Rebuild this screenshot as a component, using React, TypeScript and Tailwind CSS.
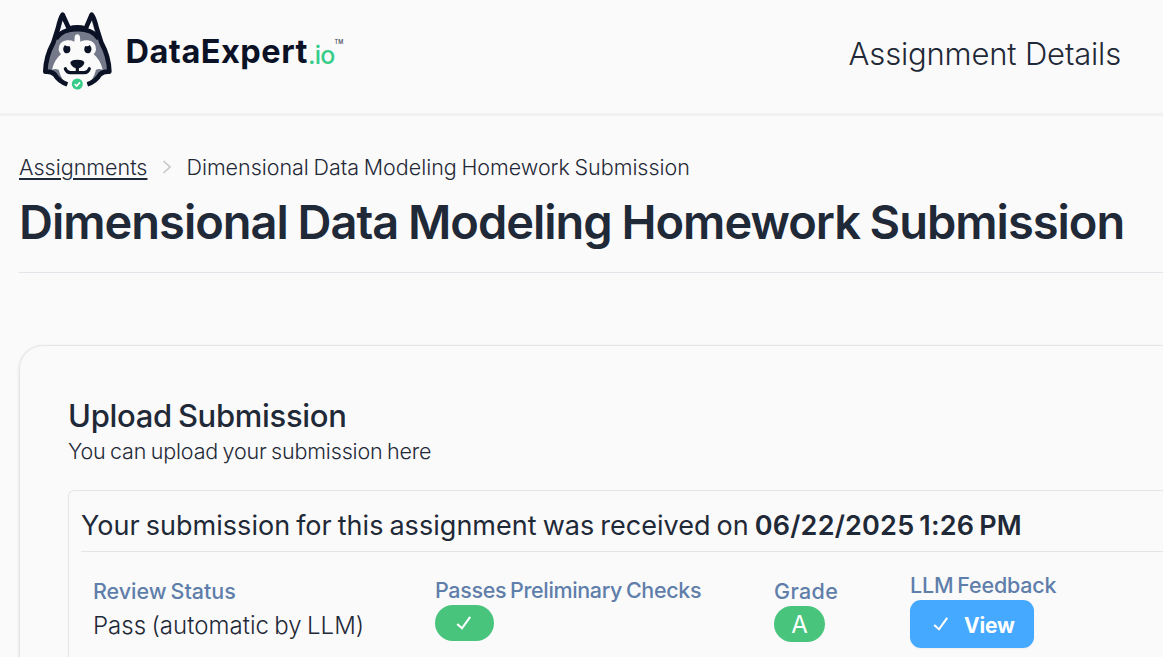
import type { ReactNode } from "react";

function HuskyMark() {
  return (
    <svg viewBox="36 30 213 246" className="h-[82px] w-[71px] shrink-0" fill="none">
      <path
        d="M98 44 L117 86 Q142 78 167 86 L185 44 Q194 54 201 84 L214 128 Q235 170 238 213 Q222 217 211 222 Q204 242 172 253 L112 253 Q80 242 73 222 Q62 217 46 213 Q49 170 70 128 L83 84 Q90 54 98 44Z"
        fill="#747a89"
      />
      <path
        d="M142 103 Q149 103 150 112 L151 125 Q160 120 174 121 Q198 125 198 149 Q197 157 191 163 Q210 178 218 209 Q208 205 198 209 Q190 240 172 252 L112 252 Q94 240 86 209 Q76 205 66 209 Q74 178 93 163 Q87 157 86 149 Q86 125 110 121 Q124 120 133 125 L134 112 Q135 103 142 103Z"
        fill="#fafafa"
      />
      <path d="M98 62 L113 88 Q98 93 87 103Z M185 62 L170 88 Q185 93 197 103Z" fill="#fafafa" />
      <path
        d="M112 253 Q86 244 74 223 Q62 213 46 215 Q47 170 70 128 L84 84 Q91 54 98 44 L117 86 Q142 78 167 86 L185 44 Q193 54 200 84 L214 128 Q237 170 238 215 Q222 213 210 223 Q198 244 172 253"
        stroke="#0b1226"
        strokeWidth="14"
        strokeLinejoin="round"
      />
      <path d="M78 117 Q94 88 142 87 Q190 88 206 117" stroke="#0b1226" strokeWidth="13" />
      <path
        d="M105 135 Q110 141 118 138 Q124 148 119 156 Q112 163 104 158 Q97 150 101 141Z M179 135 Q174 141 166 138 Q160 148 165 156 Q172 163 180 158 Q187 150 183 141Z"
        fill="#0b1226"
      />
      <path
        d="M142 179 Q162 179 163 188 Q162 198 147 205 L137 205 Q122 198 121 188 Q122 179 142 179Z"
        fill="#0b1226"
      />
      <path
        d="M142 200 V216 M106 206 Q110 218 121 218 H163 Q174 218 178 206"
        stroke="#0b1226"
        strokeWidth="9.5"
        strokeLinecap="round"
      />
      <path d="M114 240 H170 V272 H114Z" fill="#fafafa" />
      <circle cx="142" cy="252" r="16.5" fill="#37cc89" />
      <path d="M134 252 L140 258 L150 247" stroke="#fff" strokeWidth="5" />
    </svg>
  );
}

function Check() {
  return (
    <svg viewBox="0 0 16 16" className="size-4 shrink-0" fill="none">
      <path d="M1.2 9 L6 13.3 L14.2 1.8" stroke="#fff" strokeWidth="2.1" />
    </svg>
  );
}

function Label({ children, className }: { children: ReactNode; className: string }) {
  return (
    <div className={`text-[21.5px] leading-7 font-medium whitespace-nowrap text-[#607eaa] [word-spacing:-1.5px] ${className}`}>
      {children}
    </div>
  );
}

export default function App() {
  return (
    <div className="h-[657px] overflow-hidden bg-[#fafafa] font-['Inter','Liberation_Sans',sans-serif] text-[#1f2937]">
      <header className="flex h-[116px] justify-between border-b-3 border-[#f1f1f1] pr-[42px] pl-[42px]">
        <div className="flex pt-2.5">
          <HuskyMark />
          <div className="flex pt-[22px] pl-[12.5px] leading-10 text-[#0b1226]">
            <span className="text-[32.5px] font-bold tracking-[0.5px]">DataExpert</span>
            <span className="pt-[3px] text-[25px] font-medium tracking-[-0.8px] text-[#37cc89]">.io</span>
            <span className="pt-[4px] text-[5.5px] leading-3 font-medium text-[#3c4253]">TM</span>
          </div>
        </div>
        <div className="pt-[34px] text-[31px] leading-10 font-light tracking-[-0.17px]">Assignment Details</div>
      </header>

      <main className="pl-[19px]">
        <nav className="flex items-center pt-[37px] text-[21.5px] leading-7 font-light whitespace-nowrap">
          <a className="underline decoration-2 underline-offset-[3px]">Assignments</a>
          <svg viewBox="0 0 10 14" className="mr-[14px] ml-[15px] h-3.5 w-2.5" fill="none">
            <path d="M1.5 1 L8 7 L1.5 13" stroke="#c5c8cd" strokeWidth="1.7" />
          </svg>
          <span className="tracking-[-0.03px] [word-spacing:-1.3px]">Dimensional Data Modeling Homework Submission</span>
        </nav>
        <h1 className="mt-[13px] border-b border-[#e3e5ea] pb-[22px] text-[47px] leading-14 font-semibold tracking-[-1px] whitespace-nowrap [word-spacing:-1.2px]">
          Dimensional Data Modeling Homework Submission
        </h1>

        <section className="mt-[72px] h-[400px] rounded-tl-3xl border-t border-l border-[#e5e5e5] pt-[50px] pl-12 shadow-[0_1px_3px_rgba(0,0,0,0.12)]">
          <h2 className="text-[31px] leading-10 font-medium tracking-[-0.3px] [word-spacing:-2px]">Upload Submission</h2>
          <p className="mt-px text-[21.5px] leading-7 font-light tracking-[-0.15px] [word-spacing:-1.5px]">
            You can upload your submission here
          </p>

          <div className="mt-[25px] h-[260px] rounded-tl-md border-t border-l border-[#e5e5e5] pt-[17px] pl-3">
            <p className="border-b border-[#e5e5e5] pb-[7px] text-[27px] leading-9 whitespace-nowrap">
              <span className="tracking-[0.04px] [word-spacing:-1.7px]">Your submission for this assignment was received on </span>
              <b className="font-semibold tracking-[0.2px] [word-spacing:-2px]">06/22/2025 1:26 PM</b>
            </p>
            <div className="mt-[19px] flex h-[77px] items-center pl-3">
              <div className="w-[342px] shrink-0">
                <Label className="tracking-[-0.05px]">Review Status</Label>
                <div className="mt-[5px] mb-px text-[24px] leading-8 font-light tracking-[0.04px] whitespace-nowrap [word-spacing:-1.5px]">
                  Pass (automatic by LLM)
                </div>
              </div>
              <div className="w-[339px] shrink-0">
                <Label className="tracking-[-0.35px]">Passes Preliminary Checks</Label>
                <div className="mt-px mb-[3px] flex h-9 w-[59px] items-center justify-center rounded-full bg-[#48c47d] pr-0.5">
                  <Check />
                </div>
              </div>
              <div className="w-[136px] shrink-0">
                <Label className="tracking-[0.35px]">Grade</Label>
                <div className="mt-px flex h-9 w-[51px] items-center justify-center rounded-full bg-[#48c47d] pt-0.5 text-2xl text-white">
                  A
                </div>
              </div>
              <div className="shrink-0">
                <Label className="tracking-[-0.2px]">LLM Feedback</Label>
                <button className="mt-px flex h-12 w-[124px] items-center rounded-[11px] bg-[#45a9ff] pl-[23px] text-[21px] leading-7 font-bold tracking-[-0.2px] text-white shadow-[0_1px_2px_rgba(0,0,0,0.05)]">
                  <Check />
                  <span className="pt-[3px] pl-[15px]">View</span>
                </button>
              </div>
            </div>
          </div>
        </section>
      </main>
    </div>
  );
}
